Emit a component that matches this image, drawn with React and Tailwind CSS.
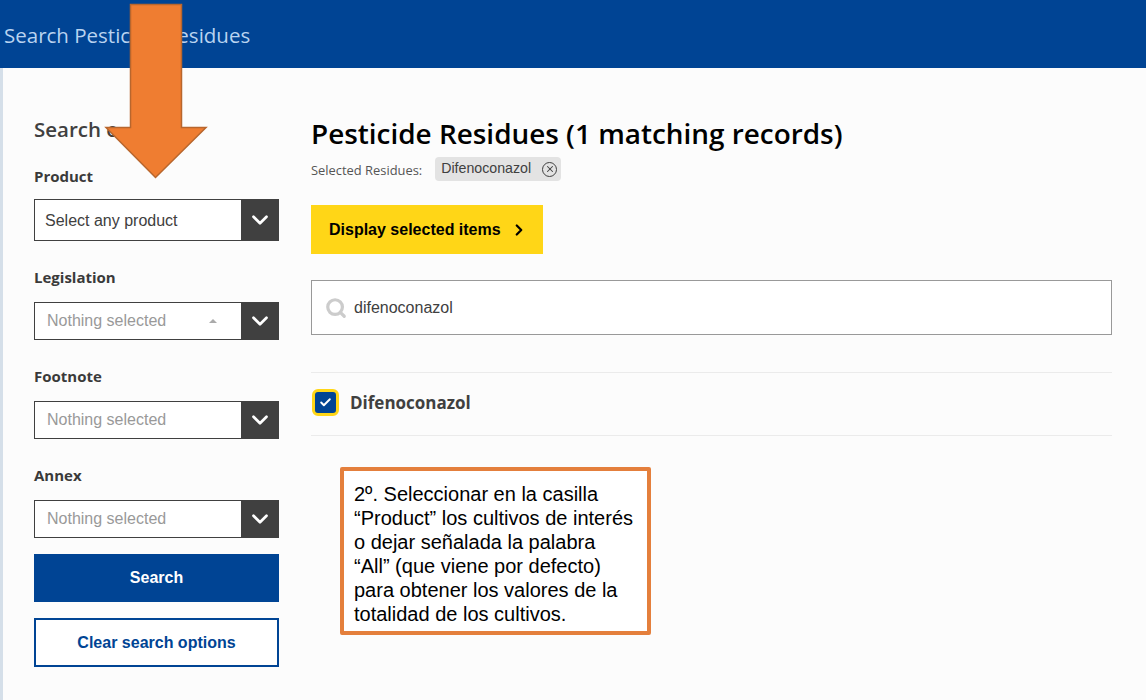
import { Check, ChevronDown, ChevronRight, Search, X } from "lucide-react";

const open = "font-['Open_Sans',sans-serif]";
const arial = "font-['Liberation_Sans',Arial,sans-serif]";

function Picker({ label, value, tall, caret, top }) {
  return (
    <div className={top}>
      <div className={`${open} text-[15px] leading-[20px] font-bold text-[#3a3a3a]`}>{label}</div>
      <div className={`flex ${tall ? "h-[42px] mt-[13px]" : "h-[38px] mt-[15px]"} border border-[#404040] bg-white`}>
        <div className={`flex-1 flex items-center justify-between ${arial} text-[16px] ${tall ? "pl-[10px] pt-[2px] text-[#404040]" : "pl-[12px] text-[#999999]"} pr-[24px]`}>
          <span>{value}</span>
          {caret && <span className="w-0 h-0 border-x-[4px] border-x-transparent border-b-[4px] border-b-[#aaaaaa]"></span>}
        </div>
        <div className="w-[38px] -my-px -mr-px bg-[#404040] flex items-center justify-center">
          <ChevronDown className="text-white" size={26} strokeWidth={2.5} />
        </div>
      </div>
    </div>
  );
}

export default function App() {
  return (
    <div className="relative h-[700px] w-[1146px] overflow-hidden bg-[#fcfcfc]">
      <header className="h-[68px] bg-[#004494] flex items-center pl-[4px] pt-[2px]">
        <span className={`${open} text-[20.5px] text-[#b9d3f0]`}>Search Pesticide Residues</span>
      </header>

      <div className="flex h-[632px] border-l-[3px] border-l-[#d5dfe9]">
        <aside className="w-[245px] ml-[31px] shrink-0 pt-[45px]">
          <h2 className={`${open} text-[20.5px] leading-[32px] font-semibold text-[#404040]`}>Search o</h2>
          <Picker label="Product" value="Select any product" tall top="mt-[21px]" />
          <Picker label="Legislation" value="Nothing selected" caret top="mt-[26px]" />
          <Picker label="Footnote" value="Nothing selected" top="mt-[26px]" />
          <Picker label="Annex" value="Nothing selected" top="mt-[26px]" />
          <button className={`mt-[16px] w-full h-[48px] bg-[#004494] text-white ${arial} text-[16px] font-bold`}>Search</button>
          <button className={`mt-[16px] w-full h-[49px] border-[2px] border-[#004494] bg-white text-[#004494] ${arial} text-[16px] font-bold`}>Clear search options</button>
        </aside>

        <main className="w-[801px] ml-[32px] pt-[45px]">
          <h1 className={`${open} text-[27.9px] leading-[40px] font-semibold text-black`}>Pesticide Residues (1 matching records)</h1>
          <div className="flex items-center h-[24px] mt-[4px]">
            <span className={`${open} text-[12.9px] pt-[4px] text-[#555555]`}>Selected Residues:</span>
            <span className={`ml-[13px] h-[24px] w-[126px] pl-[6px] rounded-[4px] bg-[#e3e3e3] flex items-center ${arial} text-[14.2px] text-[#404040]`}>
              Difenoconazol
              <span className="ml-[11px] w-[15px] h-[15px] rounded-full border-[1.5px] border-[#404040] flex items-center justify-center">
                <X size={10} strokeWidth={2.5} className="text-[#404040]" />
              </span>
            </span>
          </div>
          <button className={`mt-[24px] w-[232px] h-[49px] bg-[#ffd617] flex items-center pl-[18px] ${arial} text-[16px] font-bold text-black`}>
            Display selected items
            <ChevronRight size={18} strokeWidth={3} className="ml-[9px]" />
          </button>
          <div className="mt-[26px] h-[55px] border border-[#999999] bg-white flex items-center pl-[13px]">
            <Search size={22} strokeWidth={3.5} className="text-[#cccccc]" />
            <span className={`ml-[7px] ${arial} text-[16px] text-[#404040]`}>difenoconazol</span>
          </div>
          <div className="mt-[37px] h-[64px] border-y border-[#ebebeb] flex items-center pl-px">
            <span className="w-[27px] h-[27px] -mt-[3px] rounded-[6px] border-[3px] border-[#ffd617] bg-[#004494] flex items-center justify-center">
              <Check size={13} strokeWidth={3.5} className="text-white" />
            </span>
            <span className={`ml-[11px] -mt-[2px] ${open} text-[17px] font-bold text-[#404040]`}>Difenoconazol</span>
          </div>
          <div className={`mt-[31px] ml-[29px] w-[311px] h-[168px] border-[4px] border-[#e47f3c] rounded-[2px] bg-white pl-[10px] pt-[11px] ${arial} text-[20px] leading-[24px] text-black`}>
            <p>2º. Seleccionar en la casilla</p>
            <p>“Product” los cultivos de interés</p>
            <p>o dejar señalada la palabra</p>
            <p>“All” (que viene por defecto)</p>
            <p>para obtener los valores de la</p>
            <p>totalidad de los cultivos.</p>
          </div>
        </main>
      </div>

      <svg className="absolute left-[104px] top-[2px]" width="106" height="178" viewBox="0 0 106 178">
        <path d="M26.5 2.5H77.5V125.5H102L51.5 175.5L2 125.5H26.5Z" fill="#ef7d31" stroke="#b8662d" strokeWidth="1.5" />
      </svg>
    </div>
  );
}
